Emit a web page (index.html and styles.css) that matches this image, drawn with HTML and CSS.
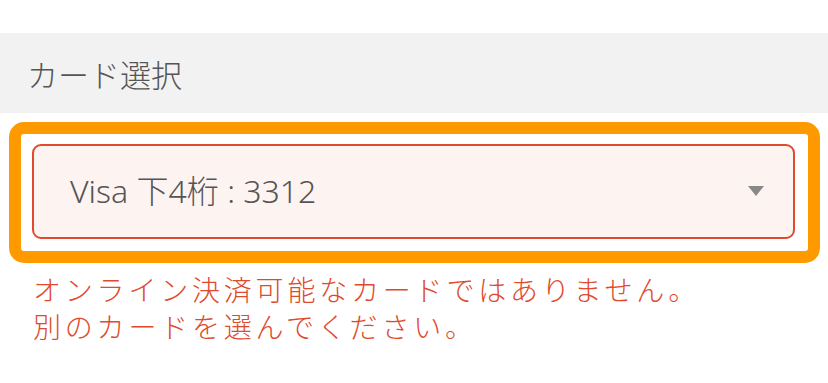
FILE: index.html
```html
<!DOCTYPE html>
<html lang="ja">
<head>
<meta charset="utf-8">
<link rel="stylesheet" href="styles.css">
</head>
<body>
<div class="page">
  <div class="section-head">カード選択</div>
  <div class="field">
    <div class="highlight">
      <div class="select">
        <span class="select-value">Visa 下4桁 : 3312</span>
        <svg class="caret" width="16" height="10" viewBox="0 0 16 10"><path d="M0 0H16L8 10Z" fill="#888"/></svg>
      </div>
    </div>
    <p class="error">オンライン決済可能なカードではありません。<br>別のカードを選んでください。</p>
  </div>
</div>
</body>
</html>
```

FILE: styles.css
```css
html, body {
  margin: 0;
  padding: 0;
  background: #fff;
}
body {
  font-family: "Noto Sans CJK JP", "Noto Sans", sans-serif;
  font-weight: 300;
  width: 828px;
  height: 383px;
  overflow: hidden;
}
.page {
  padding-top: 33px;
}
.section-head {
  height: 80px;
  background: #f2f2f2;
  color: #555;
  font-size: 31px;
  display: flex;
  align-items: center;
  padding-left: 27px;
  box-sizing: border-box;
}
.field {
  padding: 9px 8px 0 9px;
}
.highlight {
  border: 12px solid #ff9900;
  border-radius: 15px;
  padding: 10px 13px 12px 11px;
  background: #fff;
}
.select {
  height: 95px;
  box-sizing: border-box;
  border: 2px solid #e04b2f;
  border-radius: 9px;
  background: #fdf4f2;
  display: flex;
  align-items: center;
  justify-content: space-between;
  padding: 0 29px 2px 36px;
}
.select-value {
  color: #555;
  font-family: "Noto Sans", "Noto Sans CJK JP", sans-serif;
  font-size: 32px;
  line-height: 40px;
}
.caret {
  display: block;
}
.error {
  margin: 8px 0 0 24px;
  color: #e04a2c;
  font-size: 28px;
  letter-spacing: 3.8px;
  line-height: 37px;
}
```
